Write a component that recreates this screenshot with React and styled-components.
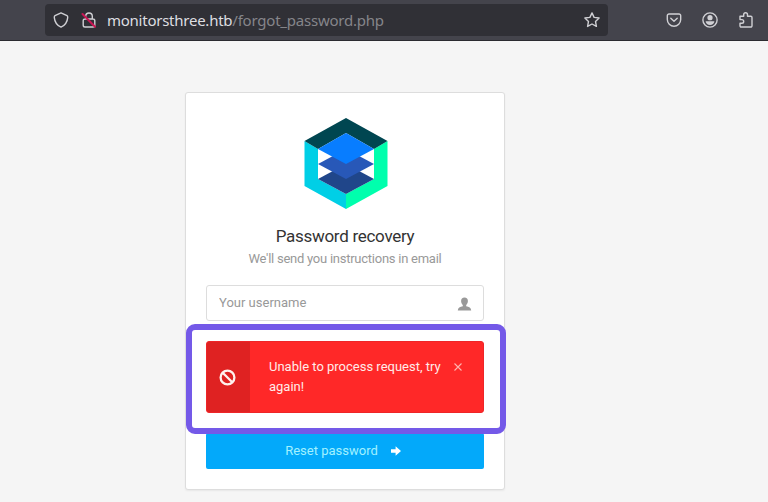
import React from "react";
import styled, { createGlobalStyle } from "styled-components";

const GlobalStyle = createGlobalStyle`
  * { box-sizing: border-box; }
  body {
    margin: 0;
    background: #f5f5f5;
    font-family: Roboto, "Liberation Sans", sans-serif;
    overflow: hidden;
  }
`;

const Page = styled.div`
  height: 502px;
  display: flex;
  flex-direction: column;
`;

const BrowserBar = styled.header`
  flex: none;
  height: 41px;
  padding: 4px 14px 4px 45px;
  display: flex;
  align-items: flex-start;
  background: #44444c;
  border-bottom: 1px solid #2b2b30;
`;

const AddressBar = styled.div`
  width: 563px;
  height: 32px;
  padding: 0 8px;
  display: flex;
  align-items: center;
  background: #303036;
  border-radius: 4px;
`;

const Url = styled.span`
  flex: 1;
  margin-left: 10px;
  font: 15px/20px "Noto Sans", sans-serif;
  letter-spacing: -0.22px;
  color: #85858a;
  white-space: nowrap;
`;

const Host = styled.span`
  letter-spacing: -0.25px;
  color: #dedee1;
`;

const BarIcon = styled.svg`
  flex: none;
  width: 16px;
  height: 16px;
  margin-left: ${(p) => p.$gap || 0}px;
  fill: none;
  stroke: #d0d0d4;
  stroke-width: 1.4;
  stroke-linejoin: round;
  stroke-linecap: round;
`;

const ToolbarActions = styled.div`
  flex: 1;
  height: 32px;
  display: flex;
  align-items: center;
  justify-content: flex-end;
  gap: 20px;
`;

const Main = styled.main`
  flex: 1;
  padding: 51px 0 0 185px;
`;

const Card = styled.section`
  width: 320px;
  height: 398px;
  padding: 25px 20px 20px;
  display: flex;
  flex-direction: column;
  align-items: center;
  background: #fff;
  border: 1px solid #dddddd;
  border-radius: 3px;
  box-shadow: 0 1px 2px rgba(0, 0, 0, 0.06);
`;

const Logo = styled.svg`
  flex: none;
  width: 84px;
  height: 92px;
  margin-left: 2px;
`;

const Title = styled.h1`
  margin: 14px 0 0;
  font-size: 17px;
  font-weight: 400;
  line-height: 24px;
  letter-spacing: -0.28px;
  color: #333;
`;

const Subtitle = styled.p`
  margin: 1px 0 0;
  font-size: 13px;
  line-height: 20px;
  letter-spacing: -0.25px;
  color: #999;
`;

const Field = styled.label`
  flex: none;
  width: 100%;
  height: 36px;
  margin-top: 16px;
  padding: 0 11px 0 12px;
  display: flex;
  align-items: center;
  justify-content: space-between;
  border: 1px solid #ddd;
  border-radius: 3px;
`;

const UsernameInput = styled.input`
  width: 200px;
  padding: 0;
  border: 0;
  outline: 0;
  background: none;
  font: 13px/20px Roboto, sans-serif;
  &::placeholder { color: #999; opacity: 1; }
`;

const UserIcon = styled.svg`
  width: 15px;
  height: 14px;
  margin-top: 1px;
  fill: #999;
`;

const AlertArea = styled.div`
  position: relative;
  width: 100%;
  margin-top: 20px;
`;

const Highlight = styled.div`
  position: absolute;
  inset: -17px -22px -21px -20px;
  border: 6px solid #7459e8;
  border-radius: 9px;
  pointer-events: none;
`;

const Alert = styled.div`
  height: 72px;
  display: flex;
  background: #ff2828;
  border: 1px solid #ee2528;
  border-radius: 3px;
  overflow: hidden;
`;

const AlertStatus = styled.div`
  width: 43px;
  padding-right: 2px;
  display: flex;
  align-items: center;
  justify-content: center;
  background: #df2222;
`;

const BlockIcon = styled.svg`
  width: 17px;
  height: 17px;
  fill: none;
  stroke: #fff1ee;
  stroke-width: 2.3;
`;

const AlertMessage = styled.p`
  width: 178px;
  margin: 15px 0 0 19px;
  font-size: 13px;
  line-height: 20px;
  color: #ffebe8;
`;

const CloseButton = styled.button`
  width: 8px;
  height: 8px;
  margin: 21px 0 0 7px;
  padding: 0;
  border: 0;
  background: none;
  display: flex;
`;

const CloseIcon = styled.svg`
  width: 8px;
  height: 8px;
  stroke: #ffb3ae;
  stroke-width: 1.1;
`;

const ResetButton = styled.button`
  flex: none;
  width: 100%;
  height: 36px;
  margin-top: 20px;
  padding: 0 4px 0 0;
  display: flex;
  align-items: center;
  justify-content: center;
  gap: 13px;
  color: #a2f1ff;
  background: #03a9fa;
  border: 0;
  border-radius: 2px;
  font: 13px/20px Roboto, sans-serif;
`;

const ArrowIcon = styled.svg`
  width: 10px;
  height: 10px;
  fill: #fff;
`;

export default function App() {
  return (
    <Page>
      <GlobalStyle />
      <BrowserBar>
        <AddressBar>
          <BarIcon viewBox="0 0 16 16">
            <path d="M8 .9 14 3.6c.8.4.8 1 .7 2C14.300 10 12.200 13.200 8 15.100 3.800 13.200 1.700 10 1.300 5.600c-.1-1-.1-1.600.7-2z" />
          </BarIcon>
          <BarIcon viewBox="0 0 16 16" $gap={12}>
            <path d="M4.700 7V4.300a3.300 3.300 0 0 1 6.600 0V7M4 7h8a1.800 1.800 0 0 1 1.800 1.800v4.400a1.800 1.800 0 0 1-1.800 1.800H4a1.800 1.800 0 0 1-1.800-1.800V8.800A1.800 1.800 0 0 1 4 7z" />
            <path d="M1.500 2 14 14.800" stroke="#c91654" strokeWidth="2" />
          </BarIcon>
          <Url><Host>monitorsthree.htb</Host>/forgot_password.php</Url>
          <BarIcon viewBox="0 0 16 16">
            <path d="M8 .9l2.100 4.500 5 .6-3.600 3.400.9 5-4.400-2.400-4.400 2.400.9-5L.9 6l5-.6z" />
          </BarIcon>
        </AddressBar>
        <ToolbarActions>
          <BarIcon viewBox="0 0 16 16">
            <path d="M3 2h10a1.700 1.700 0 0 1 1.700 1.700V7.500a6.700 6.700 0 0 1-13.400 0V3.700A1.700 1.700 0 0 1 3 2z" />
            <path d="M4.800 6.300 8 9.300l3.200-3" />
          </BarIcon>
          <BarIcon viewBox="0 0 16 16">
            <circle cx="8" cy="8" r="7.100" />
            <circle cx="8" cy="5.700" r="2.600" fill="#d0d0d4" stroke="none" />
            <path d="M3.600 9.200h8.800c-.2 2.400-2 3.800-4.400 3.800s-4.200-1.400-4.400-3.800z" fill="#d0d0d4" stroke="none" />
          </BarIcon>
          <BarIcon viewBox="0 0 16 16">
            <path d="M2 4.300h3.700V2.700a1.900 1.900 0 0 1 3.800 0v1.600h3.300a1.200 1.200 0 0 1 1.200 1.200v8.300a1.200 1.200 0 0 1-1.200 1.200H3.200A1.200 1.200 0 0 1 2 13.800v-2.600h1.900a1.800 1.800 0 0 0 0-3.600H2z" />
          </BarIcon>
        </ToolbarActions>
      </BrowserBar>
      <Main>
        <Card>
          <Logo viewBox="0 0 84 92">
            <path d="M.5 23 14 31v30l28 15v15L.5 68z" fill="#00cfe6" />
            <path d="M83.500 23 70 31v30L42 76v15l41.500-23z" fill="#00ffad" />
            <path d="M.5 23 42 0l41.500 23L70 31 42 15 14 31z" fill="#004651" />
            <path d="M14 61l28-15 28 15-28 15z" fill="#20468a" />
            <path d="M14 46l28-15 28 15-28 15z" fill="#2858b8" />
            <path d="M14 31l28-16 28 16-28 15z" fill="#087dff" />
          </Logo>
          <Title>Password recovery</Title>
          <Subtitle>We'll send you instructions in email</Subtitle>
          <Field>
            <UsernameInput placeholder="Your username" />
            <UserIcon viewBox="0 0 15 14">
              <path d="M7.500.5c2.200 0 3.400 1.500 3.400 3.500 0 1.800-.8 3.100-1.700 3.900v1.400c2.800.3 5 1.500 5 4.200H.8c0-2.700 2.200-3.900 5-4.200V7.900C4.900 7.100 4.100 5.800 4.100 4 4.100 2 5.300.5 7.500.5z" />
            </UserIcon>
          </Field>
          <AlertArea>
            <Alert role="alert">
              <AlertStatus>
                <BlockIcon viewBox="0 0 17 17">
                  <circle cx="8.500" cy="8.500" r="6.900" />
                  <path d="m3.700 3.700 9.600 9.600" />
                </BlockIcon>
              </AlertStatus>
              <AlertMessage>Unable to process request, try again!</AlertMessage>
              <CloseButton aria-label="Close">
                <CloseIcon viewBox="0 0 8 8"><path d="m.5.5 7 7m0-7-7 7" /></CloseIcon>
              </CloseButton>
            </Alert>
            <Highlight />
          </AlertArea>
          <ResetButton>
            Reset password
            <ArrowIcon viewBox="0 0 10 10">
              <path d="M0 3.300h4.600V.2L10 5 4.600 9.800V6.700H0z" />
            </ArrowIcon>
          </ResetButton>
        </Card>
      </Main>
    </Page>
  );
}
